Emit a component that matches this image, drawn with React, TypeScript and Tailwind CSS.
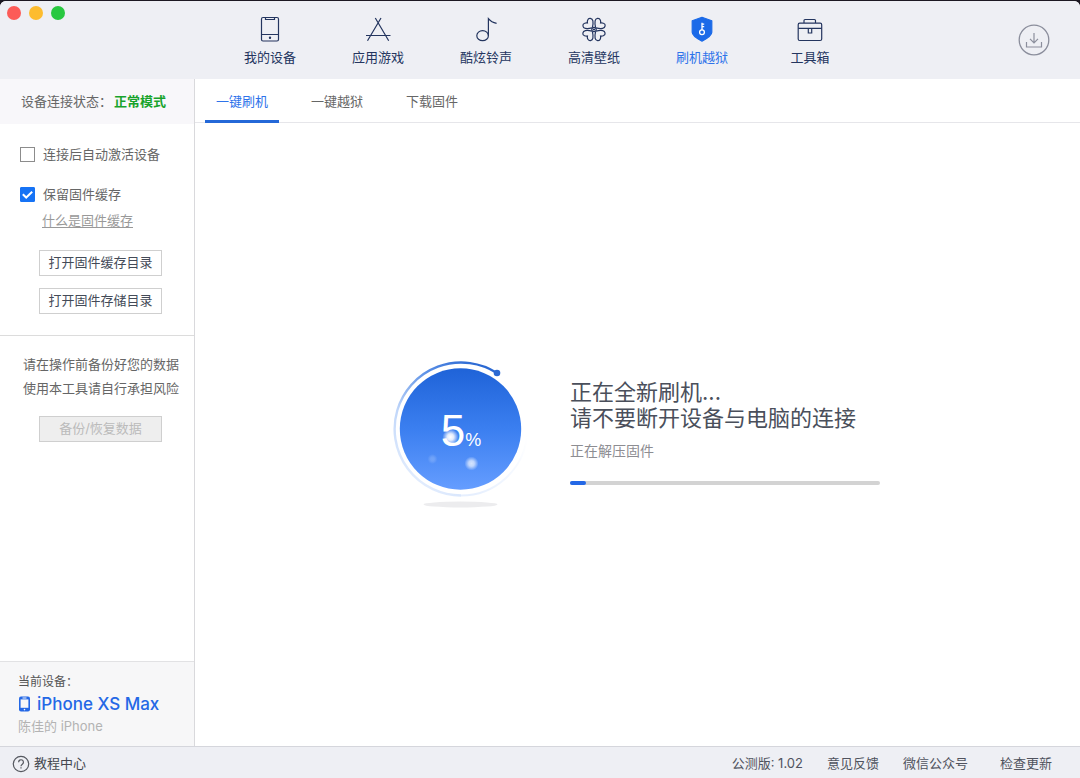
import type { ReactNode } from "react";
import clsx from "clsx";

type NavItem = {
  label: string;
  icon: ReactNode;
  active?: boolean;
};

const navItems: NavItem[] = [
  {
    label: "我的设备",
    icon: (
      <>
        <rect x="4.5" y="1.5" width="17" height="23.5" rx="1.5" />
        <path d="M4.5 18.5h17M8.5 2v1.5h9V2" />
        <circle cx="13" cy="21.8" r="0.6" fill="currentColor" />
      </>
    ),
  },
  {
    label: "应用游戏",
    icon: <path d="M10.3 2l13.4 22.7M16 2L2.5 24.7M1 19.5h24.5" />,
  },
  {
    label: "酷炫铃声",
    icon: (
      <>
        <ellipse cx="9.6" cy="19.7" rx="5.8" ry="5" />
        <path d="M15.4 19.7V2.7c2 2.5 4.5 4 8.2 4.6" />
      </>
    ),
  },
  {
    label: "高清壁纸",
    icon: <CloverShape />,
  },
  {
    label: "刷机越狱",
    active: true,
    icon: (
      <>
        <path
          d="M13 1.3l9.8 3.4v11.5c0 3-5.3 6.6-9.8 8.9-4.5-2.3-9.8-5.9-9.8-8.9V4.7z"
          fill="#1b6ae8"
          stroke="#1b6ae8"
          strokeLinejoin="round"
        />
        <circle cx="13" cy="16.3" r="2.4" stroke="#fff" strokeWidth="1.3" />
        <path d="M13 13.9V6.8M13.4 8.2h1.8M13.4 10.6h1.8" stroke="#fff" strokeWidth="1.3" />
      </>
    ),
  },
  {
    label: "工具箱",
    icon: (
      <>
        <rect x="1.2" y="7.2" width="23.5" height="17.3" rx="1.5" />
        <path d="M7 7V4.5a1 1 0 0 1 1-1h9.5a1 1 0 0 1 1 1V7M1.2 12.3h23.5M11.3 12.3v4.7h3.4v-4.7" />
      </>
    ),
  },
];

const tabs = ["一键刷机", "一键越狱", "下载固件"];

function CloverShape() {
  const petal =
    "M11.4 11.4C12 9 12.2 6.500 11.900 4.900 11.300 1.900 7.600 1.400 6.700 4 6.300 5 6.200 5.800 6.400 6.900 5.300 6.700 4.500 6.800 3.600 7.200 1 8.200 1.500 11.900 4.300 12.400 6 12.700 8.500 12.500 10.900 11.900";
  return (
    <>
      {[0, 90, 180, 270].map((angle) => (
        <path key={angle} d={petal} transform={`rotate(${angle} 13 13.5)`} />
      ))}
      <circle cx="13" cy="13.5" r="2.2" />
      <circle cx="13" cy="13.5" r="0.5" fill="currentColor" />
    </>
  );
}

function CheckOption({ id, label, checked }: { id: string; label: string; checked?: boolean }) {
  return (
    <div className="flex items-center gap-2">
      <span className="relative size-[15px]">
        <input
          id={id}
          type="checkbox"
          defaultChecked={checked}
          className="peer block size-[15px] appearance-none border border-[#8c8c8c] bg-white checked:rounded-[1px] checked:border-[#1673f5] checked:bg-[#1673f5]"
        />
        <svg
          viewBox="0 0 15 15"
          className="pointer-events-none absolute inset-0 hidden size-[15px] peer-checked:block"
          fill="none"
          stroke="#fff"
          strokeWidth="2"
        >
          <path d="M2.8 7.2l3.4 3.3 6-5.7" />
        </svg>
      </span>
      <label htmlFor={id}>{label}</label>
    </div>
  );
}

function Header() {
  return (
    <header className="grid h-[78px] grid-cols-[1fr_auto_1fr] bg-[#eeeff4]">
      <div className="flex gap-2 pt-[5px] pl-[7px]">
        <button aria-label="关闭" className="size-3.5 rounded-full bg-[#fc5b57]" />
        <button aria-label="最小化" className="size-3.5 rounded-full bg-[#fdbc2e]" />
        <button aria-label="全屏" className="size-3.5 rounded-full bg-[#28c840]" />
      </div>

      <nav className="flex">
        {navItems.map((item) => (
          <a
            key={item.label}
            href="#"
            className={clsx(
              "flex w-[108px] flex-col items-center gap-[5px] pt-[15px]",
              item.active ? "text-[#2e73ea]" : "text-[#24355f]"
            )}
          >
            <svg
              viewBox="0 0 26 26"
              className="size-[26px]"
              fill="none"
              stroke="currentColor"
              strokeWidth="1.2"
            >
              {item.icon}
            </svg>
            <span className="leading-5">{item.label}</span>
          </a>
        ))}
      </nav>

      <div className="flex items-center justify-end pr-[30px]">
        <button aria-label="下载">
          <svg viewBox="0 0 32 32" className="size-8" fill="none" stroke="#8b8e9c">
            <circle cx="16" cy="16" r="14.8" strokeWidth="1.3" />
            <path d="M16 9v9.5M12 14.8l4 4 4-4M8.5 18v5h15v-5" strokeWidth="1.2" />
          </svg>
        </button>
      </div>
    </header>
  );
}

function Sidebar() {
  return (
    <aside className="flex w-[195px] shrink-0 flex-col border-r border-[#d9d9dc] text-[#666]">
      <div className="flex h-[45px] items-center bg-[#f8f7fa] pl-[21px]">
        <span>设备连接状态：</span>
        <strong className="ml-0.5 font-bold text-[#17a32b]">正常模式</strong>
      </div>

      <div className="border-b border-[#dcdcdc] pt-5 pb-[21px] pl-5">
        <div className="flex flex-col gap-5 leading-5">
          <CheckOption id="auto-activate" label="连接后自动激活设备" />
          <CheckOption id="keep-cache" label="保留固件缓存" checked />
        </div>
        <a href="#" className="mt-1.5 ml-[22px] block leading-5 text-[#999] underline underline-offset-2">
          什么是固件缓存
        </a>
        <div className="mt-5 ml-[19px] flex w-[123px] flex-col gap-3 text-[#444b58]">
          <button className="h-[26px] border border-[#cfcfcf] bg-white">打开固件缓存目录</button>
          <button className="h-[26px] border border-[#cfcfcf] bg-white">打开固件存储目录</button>
        </div>
      </div>

      <div className="pt-4 pl-[23px]">
        <p className="leading-6">
          请在操作前备份好您的数据
          <br />
          使用本工具请自行承担风险
        </p>
        <button
          disabled
          className="mt-4 ml-4 h-[26px] w-[123px] border border-[#cfcfcf] bg-[#eee] text-[#bbb]"
        >
          备份/恢复数据
        </button>
      </div>

      {/* connected device */}
      <div className="mt-auto h-[85px] border-t border-[#e2e2e4] bg-[#f7f7f8] pt-2.5 pl-[18px]">
        <p className="text-xs leading-5 text-[#555]">当前设备：</p>
        <p className="flex items-center gap-1.5 text-[17px] leading-6 font-medium text-[#2468e6]">
          <svg viewBox="0 0 13 16" className="h-4 w-[13px]">
            <rect x="1" y="0.5" width="11" height="15" rx="2" fill="#2468e6" />
            <rect x="2.6" y="3.4" width="7.8" height="8.4" fill="#f7f7f8" />
            <path d="M4.5 2h4" stroke="#f7f7f8" />
            <circle cx="6.5" cy="13.6" r="0.8" fill="#f7f7f8" />
          </svg>
          iPhone XS Max
        </p>
        <p className="leading-5 text-[#b3b3b3]">陈佳的 iPhone</p>
      </div>
    </aside>
  );
}

function ProgressBall({ value }: { value: number }) {
  return (
    <div className="relative h-[148px] w-[136px] shrink-0">
      <svg viewBox="0 0 136 148" className="absolute inset-0 size-full" fill="none">
        <defs>
          <linearGradient id="ball" x1="0" y1="0" x2="0" y2="1">
            <stop offset="0" stopColor="#1f63d8" />
            <stop offset="0.5" stopColor="#3b7ff0" />
            <stop offset="1" stopColor="#659dff" />
          </linearGradient>
          <linearGradient id="ring" x1="0.8" y1="0" x2="0.3" y2="1">
            <stop offset="0" stopColor="#2b69d3" />
            <stop offset="0.25" stopColor="#5b90e6" />
            <stop offset="0.6" stopColor="#c1d7fa" />
            <stop offset="1" stopColor="#e6effe" />
          </linearGradient>
          <linearGradient id="tail" x1="0" y1="0.5" x2="1" y2="0">
            <stop offset="0" stopColor="#e6effe" />
            <stop offset="1" stopColor="#fff" />
          </linearGradient>
          <radialGradient id="spark">
            <stop offset="0" stopColor="#fff" />
            <stop offset="0.4" stopColor="#fff" stopOpacity="0.85" />
            <stop offset="1" stopColor="#fff" stopOpacity="0" />
          </radialGradient>
        </defs>
        <path d="M104 12A66.5 66.5 0 1 0 68 134.5" stroke="url(#ring)" strokeWidth="2.4" />
        <path d="M68 134.5A66.5 66.5 0 0 0 134 75" stroke="url(#tail)" strokeWidth="2" />
        <circle cx="104" cy="12" r="3.3" fill="#2b69d3" />
        <circle cx="67.5" cy="68" r="60.7" fill="url(#ball)" />
        <circle cx="78.5" cy="102.5" r="7" fill="url(#spark)" opacity="0.75" />
        <circle cx="39.5" cy="98" r="5" fill="url(#spark)" opacity="0.2" />
        <circle cx="57.5" cy="76" r="8" fill="url(#spark)" />
        <ellipse cx="67.5" cy="143.5" rx="37" ry="3" fill="#ececee" />
      </svg>
      <p className="relative flex items-baseline justify-center pt-[45px] font-['Liberation_Sans',sans-serif] text-white">
        <span className="text-[44px] leading-[50px]">{value}</span>
        <span className="text-lg">%</span>
      </p>
    </div>
  );
}

function FlashProgress() {
  const progress = 5;

  return (
    <section className="flex flex-1 items-center justify-center gap-[41px] pr-0.5">
      <ProgressBall value={progress} />
      <div className="w-[310px] pb-1.5">
        <h1 className="text-[22px] leading-[26px] text-[#4a4f5b]">
          正在全新刷机...
          <br />
          请不要断开设备与电脑的连接
        </h1>
        <p className="mt-2.5 text-sm leading-5 text-[#8d8d92]">正在解压固件</p>
        <div
          role="progressbar"
          aria-label="刷机进度"
          aria-valuenow={progress}
          className="mt-5 h-1 rounded-full bg-[#d3d3d3]"
        >
          <div className="h-1 rounded-full bg-[#2468e6]" style={{ width: `${progress}%` }} />
        </div>
      </div>
    </section>
  );
}

function Footer() {
  return (
    <footer className="flex h-8 items-center border-t border-[#d5d6dc] bg-[#eeeff4] pt-0.5 pr-7 pl-3 text-[#50535e]">
      <a href="#" className="flex items-center gap-1 text-[#44474f]">
        <svg viewBox="0 0 18 18" className="size-[18px]" fill="none" stroke="#55585f">
          <circle cx="9" cy="9" r="7.7" strokeWidth="1.2" />
          <path
            d="M6.6 7.2a2.4 2.4 0 1 1 3.7 2c-.9.6-1.3 1-1.3 2M9 12.3v1.2"
            strokeWidth="1.2"
          />
        </svg>
        教程中心
      </a>
      <span className="mr-6 ml-auto">公测版: 1.02</span>
      <a href="#" className="mr-6">意见反馈</a>
      <a href="#" className="mr-8">微信公众号</a>
      <a href="#">检查更新</a>
    </footer>
  );
}

export default function App() {
  return (
    <div className="flex min-h-screen flex-col bg-[#1c1822] pt-px font-['Inter','Noto_Sans_CJK_SC',sans-serif] text-[13px]">
      <div className="flex flex-1 flex-col overflow-hidden rounded-t-md bg-white">
        <Header />
        <div className="flex flex-1">
          <Sidebar />
          <main className="flex flex-1 flex-col">
            <div role="tablist" className="flex h-11 gap-[21px] border-b border-[#e6e6ea] pl-2.5">
              {tabs.map((tab, index) => (
                <button
                  key={tab}
                  role="tab"
                  aria-selected={index === 0}
                  className={clsx(
                    "-mb-px border-b-3 px-[11px] pt-1",
                    index === 0 ? "border-[#2468d8] text-[#2e73ea]" : "border-transparent text-[#666]"
                  )}
                >
                  {tab}
                </button>
              ))}
            </div>
            <FlashProgress />
          </main>
        </div>
        <Footer />
      </div>
    </div>
  );
}
